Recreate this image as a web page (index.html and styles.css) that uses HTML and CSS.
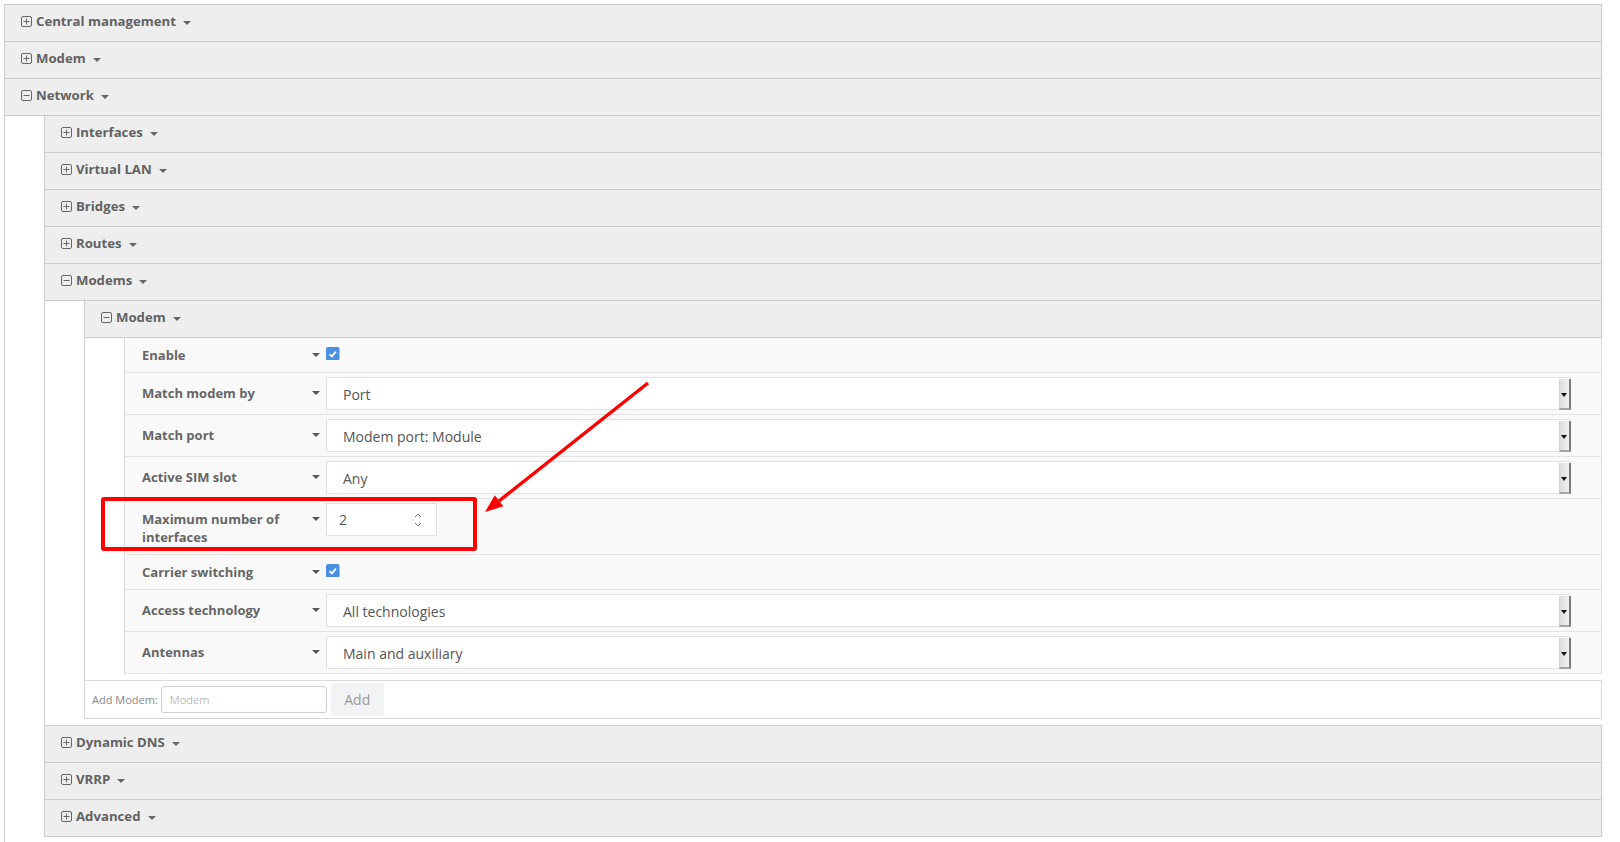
FILE: index.html
```html
<!DOCTYPE html>
<html lang="en">
<head>
  <meta charset="UTF-8">
  <meta name="viewport" content="width=device-width, initial-scale=1.0">
  <title>Network settings</title>
  <link rel="stylesheet" href="styles.css">
</head>
<body>
  <div class="tree">
    <div class="node">
      <div class="head"><svg class="ico" viewBox="0 0 11 11"><rect x=".5" y=".5" width="10" height="10" rx="1.5"/><path d="M2.5 5.5h6M5.5 2.5v6"/></svg><span>Central management</span><i class="caret"></i></div>
    </div>
    <div class="node">
      <div class="head"><svg class="ico" viewBox="0 0 11 11"><rect x=".5" y=".5" width="10" height="10" rx="1.5"/><path d="M2.5 5.5h6M5.5 2.5v6"/></svg><span>Modem</span><i class="caret"></i></div>
    </div>
    <div class="node open">
      <div class="head"><svg class="ico" viewBox="0 0 11 11"><rect x=".5" y=".5" width="10" height="10" rx="1.5"/><path d="M2.5 5.5h6"/></svg><span>Network</span><i class="caret"></i></div>
      <div class="children">
        <div class="node">
          <div class="head"><svg class="ico" viewBox="0 0 11 11"><rect x=".5" y=".5" width="10" height="10" rx="1.5"/><path d="M2.5 5.5h6M5.5 2.5v6"/></svg><span>Interfaces</span><i class="caret"></i></div>
        </div>
        <div class="node">
          <div class="head"><svg class="ico" viewBox="0 0 11 11"><rect x=".5" y=".5" width="10" height="10" rx="1.5"/><path d="M2.5 5.5h6M5.5 2.5v6"/></svg><span>Virtual LAN</span><i class="caret"></i></div>
        </div>
        <div class="node">
          <div class="head"><svg class="ico" viewBox="0 0 11 11"><rect x=".5" y=".5" width="10" height="10" rx="1.5"/><path d="M2.5 5.5h6M5.5 2.5v6"/></svg><span>Bridges</span><i class="caret"></i></div>
        </div>
        <div class="node">
          <div class="head"><svg class="ico" viewBox="0 0 11 11"><rect x=".5" y=".5" width="10" height="10" rx="1.5"/><path d="M2.5 5.5h6M5.5 2.5v6"/></svg><span>Routes</span><i class="caret"></i></div>
        </div>
        <div class="node open">
          <div class="head"><svg class="ico" viewBox="0 0 11 11"><rect x=".5" y=".5" width="10" height="10" rx="1.5"/><path d="M2.5 5.5h6"/></svg><span>Modems</span><i class="caret"></i></div>
          <div class="children">
            <div class="node open">
              <div class="head"><svg class="ico" viewBox="0 0 11 11"><rect x=".5" y=".5" width="10" height="10" rx="1.5"/><path d="M2.5 5.5h6"/></svg><span>Modem</span><i class="caret"></i></div>
              <div class="children">
                <div class="form">
                  <div class="row check">
                    <div class="label"><span>Enable</span><i class="caret"></i></div>
                    <div class="field"><svg class="checkbox" viewBox="0 0 13 13"><rect width="13" height="13" rx="2"/><path d="M3.4 6.8l2.2 2.2 4-4.6"/></svg></div>
                  </div>
                  <div class="row">
                    <div class="label"><span>Match modem by</span><i class="caret"></i></div>
                    <div class="field"><div class="select">Port</div></div>
                  </div>
                  <div class="row">
                    <div class="label"><span>Match port</span><i class="caret"></i></div>
                    <div class="field"><div class="select">Modem port: Module</div></div>
                  </div>
                  <div class="row">
                    <div class="label"><span>Active SIM slot</span><i class="caret"></i></div>
                    <div class="field"><div class="select">Any</div></div>
                  </div>
                  <div class="row">
                    <div class="label"><span>Maximum number of interfaces</span><i class="caret"></i></div>
                    <div class="field">
                      <div class="number">2<svg class="spin" viewBox="0 0 8 16"><path d="M1 5l3-3 3 3M1 11l3 3 3-3"/></svg></div>
                    </div>
                  </div>
                  <div class="row check">
                    <div class="label"><span>Carrier switching</span><i class="caret"></i></div>
                    <div class="field"><svg class="checkbox" viewBox="0 0 13 13"><rect width="13" height="13" rx="2"/><path d="M3.4 6.8l2.2 2.2 4-4.6"/></svg></div>
                  </div>
                  <div class="row">
                    <div class="label"><span>Access technology</span><i class="caret"></i></div>
                    <div class="field"><div class="select">All technologies</div></div>
                  </div>
                  <div class="row">
                    <div class="label"><span>Antennas</span><i class="caret"></i></div>
                    <div class="field"><div class="select">Main and auxiliary</div></div>
                  </div>
                </div>
              </div>
            </div>
            <div class="add-row">
              <span class="add-label">Add Modem:</span>
              <div class="add-input">Modem</div>
              <div class="add-btn">Add</div>
            </div>
          </div>
        </div>
        <div class="node">
          <div class="head"><svg class="ico" viewBox="0 0 11 11"><rect x=".5" y=".5" width="10" height="10" rx="1.5"/><path d="M2.5 5.5h6M5.5 2.5v6"/></svg><span>Dynamic DNS</span><i class="caret"></i></div>
        </div>
        <div class="node">
          <div class="head"><svg class="ico" viewBox="0 0 11 11"><rect x=".5" y=".5" width="10" height="10" rx="1.5"/><path d="M2.5 5.5h6M5.5 2.5v6"/></svg><span>VRRP</span><i class="caret"></i></div>
        </div>
        <div class="node">
          <div class="head"><svg class="ico" viewBox="0 0 11 11"><rect x=".5" y=".5" width="10" height="10" rx="1.5"/><path d="M2.5 5.5h6M5.5 2.5v6"/></svg><span>Advanced</span><i class="caret"></i></div>
        </div>
      </div>
    </div>
  </div>

  <!-- annotation -->
  <div class="mark"></div>
  <svg class="arrow" viewBox="0 0 1620 842">
    <line x1="648" y1="383" x2="499" y2="501"/>
    <polygon points="485,512 494.8,495.3 503.4,506.3"/>
  </svg>
</body>
</html>
```

FILE: styles.css
```css
body {
  margin: 0;
  font-family: "Open Sans", "DejaVu Sans", sans-serif;
  background: #fff;
  color: #666;
  position: relative;
  height: 842px;
  overflow: hidden;
}
.tree {
  margin: 4px 18px 0 4px;
}
.head {
  display: flex;
  align-items: center;
  height: 32px;
  padding: 0 0 4px 16px;
  background: #eeeeee;
  border-left: 1px solid #ccc;
  border-right: 1px solid #ccc;
  border-bottom: 1px solid #ccc;
  font-size: 13.2px;
  font-weight: bold;
  color: #626262;
}
.tree > .node:first-child > .head,
.node.open + .node > .head {
  border-top: 1px solid #ccc;
}
.ico {
  width: 11px;
  height: 11px;
  margin-right: 4px;
  margin-top: 1px;
  fill: none;
  stroke: #666;
  stroke-width: 1;
}
.caret {
  display: inline-block;
  width: 0;
  height: 0;
  border-top: 4px solid #666;
  border-left: 4px solid transparent;
  border-right: 4px solid transparent;
  margin-left: 7px;
  margin-top: 4px;
}
.children {
  border-left: 1px solid #ccc;
  padding-left: 39px;
  padding-bottom: 6px;
}
.form {
  border-left: 1px solid #ddd;
  border-right: 1px solid #ddd;
  background: #f9f9f9;
}
.row {
  display: flex;
  align-items: flex-start;
  padding: 4px 30px 4px 17px;
  border-bottom: 1px solid #e4e4e4;
}
.row.check {
  padding-top: 8px;
  padding-bottom: 8px;
}
.label {
  width: 178px;
  flex-shrink: 0;
  display: flex;
  align-items: flex-start;
  justify-content: space-between;
  padding: 7px 0 4px;
  font-size: 13px;
  font-weight: bold;
  line-height: 18px;
  color: #666;
}
.row.check .label {
  padding: 0;
}
.label span {
  width: 160px;
}
.label .caret {
  margin: 7px 0 0;
  border-top-color: #555;
}
.field {
  flex: 1;
  margin-left: 6px;
}
.checkbox {
  display: block;
  width: 13.5px;
  height: 13.5px;
  margin-top: 0.5px;
}
.checkbox rect {
  fill: #4a8fe2;
}
.checkbox path {
  fill: none;
  stroke: #fff;
  stroke-width: 1.7;
}
.select {
  position: relative;
  height: 33px;
  box-sizing: border-box;
  border: 1px solid #e2e2e2;
  border-right: none;
  background: #fff;
  padding-left: 16px;
  font-size: 14px;
  line-height: 33px;
  color: #555;
}
.select::after {
  content: "";
  position: absolute;
  right: 0;
  top: 1px;
  bottom: -1px;
  width: 9px;
  background: linear-gradient(to right, #dcdcdc, #f2f2f2);
  border-left: 1px solid #d4d4d4;
  border-right: 2px solid #7c7c7c;
  border-bottom: 2px solid #a4a4a4;
}
.select::before {
  content: "";
  position: absolute;
  right: 4px;
  top: 15px;
  border-top: 4px solid #111;
  border-left: 3px solid transparent;
  border-right: 3px solid transparent;
  z-index: 1;
}
.number {
  display: flex;
  align-items: center;
  justify-content: space-between;
  width: 111px;
  height: 33px;
  box-sizing: border-box;
  border: 1px solid #e2e2e2;
  background: #fff;
  padding: 0 14px 0 12px;
  font-size: 14px;
  color: #555;
}
.spin {
  width: 8px;
  height: 16px;
  fill: none;
  stroke: #777;
  stroke-width: 1;
}
.add-row {
  display: flex;
  align-items: center;
  height: 39px;
  box-sizing: border-box;
  border: 1px solid #d8d8d8;
  padding-left: 7px;
  background: #fff;
}
.add-label {
  font-size: 11px;
  color: #888;
  margin-right: 3px;
}
.add-input {
  width: 166px;
  height: 27px;
  box-sizing: border-box;
  border: 1px solid #c9cfdf;
  border-radius: 3px;
  padding-left: 8px;
  font-size: 11px;
  line-height: 25px;
  color: #bbb;
  margin-right: 4px;
}
.add-btn {
  width: 53px;
  height: 33px;
  border-radius: 3px;
  background: #f2f3f5;
  font-size: 14px;
  line-height: 33px;
  text-align: center;
  color: #999;
}
.mark {
  position: absolute;
  left: 101px;
  top: 497px;
  width: 376px;
  height: 54px;
  box-sizing: border-box;
  border: 4px solid #ff0000;
  border-radius: 3px;
}
.arrow {
  position: absolute;
  left: 0;
  top: 0;
  width: 1620px;
  height: 842px;
  pointer-events: none;
}
.arrow line {
  stroke: #ff0000;
  stroke-width: 3.5;
}
.arrow polygon {
  fill: #ff0000;
}
```
